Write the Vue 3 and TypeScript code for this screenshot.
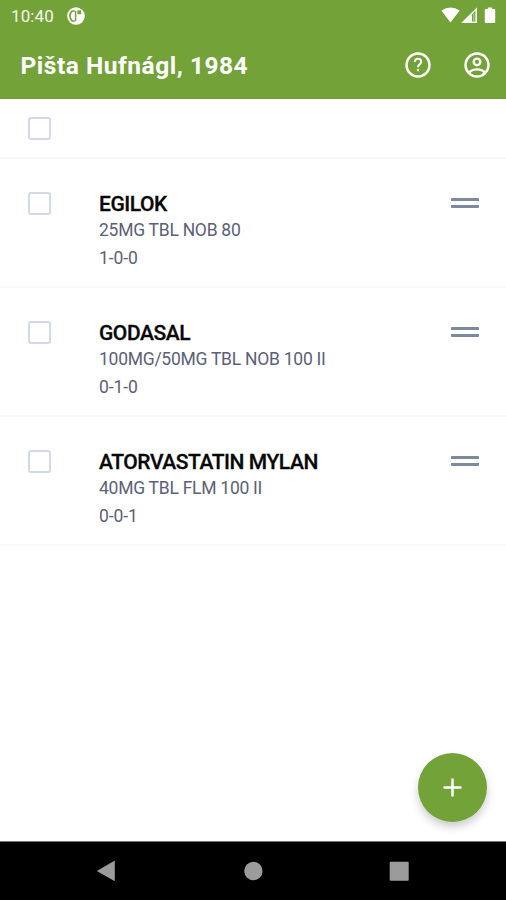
<script setup lang="ts">
interface Medication {
  name: string
  pack: string
  dosage: string
}

const patient = 'Pišta Hufnágl, 1984'

const medications: Medication[] = [
  { name: 'EGILOK', pack: '25MG TBL NOB 80', dosage: '1-0-0' },
  { name: 'GODASAL', pack: '100MG/50MG TBL NOB 100 II', dosage: '0-1-0' },
  { name: 'ATORVASTATIN MYLAN', pack: '40MG TBL FLM 100 II', dosage: '0-0-1' },
]
</script>

<template>
  <div class="screen">
    <header class="header">
      <div class="status">
        <span class="clock">10:40</span>
        <svg class="app-icon" width="18" height="18" viewBox="0 0 18 18">
          <circle cx="9" cy="9" r="8.8" fill="#fff" />
          <path d="M7.8 4H5.2Q3 5.8 3 9t2.2 5h2.6" fill="none" stroke="#73a239" stroke-width="1.7" />
          <path d="M8.6 4v10" stroke="#73a239" stroke-width="1.5" />
          <path d="M10.4 3.4h3.8v3.8h-3.8z" fill="#73a239" />
        </svg>
        <svg class="signals" width="56" height="18" viewBox="0 0 56 18">
          <path d="M.3 3.6Q9.5-2.8 18.7 3.6L9.5 15.4z" fill="#fff" />
          <path d="M36 .2V16H20.2z" fill="#fff" />
          <path d="M31 7.2 34.4 3.8v10.7H31z" fill="#73a239" />
          <path d="M32.1 7.2 33.3 6v8.5h-1.2z" fill="#b6d193" />
          <path d="M46.8.4h4.4v1.5h2.1q.9 0 .9.9v12.3q0 .9-.9.9h-8.6q-.9 0-.9-.9V2.8q0-.9.9-.9h2.1z" fill="#fff" />
        </svg>
      </div>
      <div class="toolbar">
        <h1 class="title">{{ patient }}</h1>
        <button class="icon-button" aria-label="Help">
          <svg width="26" height="26" viewBox="0 0 26 26" fill="none" stroke="#fff">
            <circle cx="13" cy="13" r="11.5" stroke-width="2.4" />
            <path d="M9.8 9.9C9.8 8 11.1 6.8 13 6.8s3.2 1.2 3.2 2.9c0 2.5-3.2 2.8-3.2 5.6" stroke-width="2" />
            <path d="M13 17v2.2" stroke-width="2.2" />
          </svg>
        </button>
        <button class="icon-button" aria-label="Account">
          <svg width="26" height="26" viewBox="0 0 26 26" fill="none" stroke="#fff" stroke-width="2.4">
            <circle cx="13" cy="13" r="11.5" />
            <circle cx="13" cy="9.9" r="3.3" />
            <path d="M5.2 20.6C6.9 18.4 9.6 17.4 13 17.4s6.1 1 7.8 3.2" />
          </svg>
        </button>
      </div>
    </header>

    <main class="content">
      <div class="select-all"><span class="checkbox" role="checkbox" aria-checked="false"></span></div>
      <ul class="list">
        <li v-for="item in medications" :key="item.name" class="item">
          <span class="checkbox" role="checkbox" aria-checked="false"></span>
          <div class="details">
            <h2 class="name">{{ item.name }}</h2>
            <p class="pack">{{ item.pack }}</p>
            <p class="dosage">{{ item.dosage }}</p>
          </div>
          <span class="handle"></span>
        </li>
      </ul>
      <button class="fab" aria-label="Add">
        <svg width="19" height="19" viewBox="0 0 19 19">
          <path d="M9.5 1.5v16M1.5 9.5h16" stroke="#fff" stroke-width="2.5" stroke-linecap="round" />
        </svg>
      </button>
    </main>

    <nav class="navbar">
      <svg width="20" height="22" viewBox="0 0 20 22"><path d="M18.8.6v20.6L.8 11z" fill="#9b9b9b" /></svg>
      <svg width="20" height="20" viewBox="0 0 20 20"><circle cx="10.4" cy="10" r="9.2" fill="#9b9b9b" /></svg>
      <svg width="20" height="20" viewBox="0 0 20 20"><rect x=".7" y=".7" width="19" height="19" rx="1" fill="#9b9b9b" /></svg>
    </nav>
  </div>
</template>

<style>
body {
  margin: 0;
}
</style>

<style scoped>
.screen {
  display: flex;
  flex-direction: column;
  height: 900px;
  background: #fff;
  font-family: Roboto, sans-serif;
}
.header {
  height: 98.5px;
  background: #73a239;
  color: #fff;
}
.status {
  display: flex;
  align-items: center;
  height: 32px;
  padding: 0 9px 0 11px;
}
.clock {
  font-size: 17px;
  letter-spacing: 0.1px;
  color: #f3f8ec;
}
.app-icon {
  margin-left: 13px;
}
.signals {
  margin-left: auto;
}
.toolbar {
  display: flex;
  align-items: center;
  height: 66px;
  padding: 0 16px 0 20.5px;
}
.title {
  flex: 1;
  margin: 0;
  font-size: 24.5px;
  font-weight: 700;
  letter-spacing: 0.52px;
}
.icon-button {
  display: flex;
  margin-left: 33px;
  padding: 0;
  border: 0;
  background: none;
}
.content {
  position: relative;
  flex: 1;
}
.select-all {
  box-sizing: border-box;
  height: 60px;
  padding: 18px 28px;
  border-bottom: 2px solid #f8f8f9;
}
.checkbox {
  display: block;
  box-sizing: border-box;
  flex: none;
  width: 23px;
  height: 23px;
  border: 2px solid #d3d9e8;
  border-radius: 3px;
}
.list {
  margin: 0;
  padding: 0;
  list-style: none;
}
.item {
  display: flex;
  box-sizing: border-box;
  height: 129px;
  padding: 33px 27px 0 28px;
  border-bottom: 2px solid #f8f8f9;
}
.details {
  flex: 1;
  margin: -1px 0 0 48px;
}
.name {
  margin: 0;
  font-size: 21px;
  font-weight: 500;
  line-height: 26px;
  letter-spacing: -0.43px;
  color: #080808;
  -webkit-text-stroke: 0.3px #080808;
}
.pack,
.dosage {
  margin: 0;
  font-size: 17.5px;
  line-height: 26px;
  color: #5b6176;
}
.pack {
  letter-spacing: -0.26px;
}
.dosage {
  margin-top: 2px;
  letter-spacing: -0.1px;
}
.handle {
  width: 28px;
  height: 4px;
  margin-top: 6px;
  border-top: 3px solid #7c89a1;
  border-bottom: 3px solid #7c89a1;
  border-radius: 1px;
}
.fab {
  position: absolute;
  right: 19px;
  bottom: 19px;
  display: flex;
  align-items: center;
  justify-content: center;
  width: 69px;
  height: 69px;
  padding: 0;
  border: 0;
  border-radius: 50%;
  background: #73a239;
  box-shadow: 0 5px 9px rgba(0, 0, 0, 0.2);
}
.navbar {
  display: flex;
  align-items: center;
  justify-content: space-between;
  box-sizing: border-box;
  height: 59px;
  padding: 0 97px 0 96px;
  border-top: 1px solid #777;
  background: #000;
}
</style>
